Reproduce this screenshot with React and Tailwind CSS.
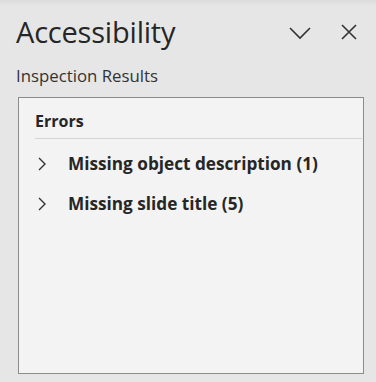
export default function App() {
  return (
    <div className="w-[376px] h-[382px] bg-[#e6e6e6] text-[#252525] relative overflow-hidden" style={{ fontFamily: '"Open Sans", "Noto Sans", sans-serif' }}>
      <div className="absolute top-0 left-0 right-0 h-[6px] bg-gradient-to-b from-[#dcdcdc] to-[#e6e6e6]" />
      <div className="flex items-center pl-[16px] pr-[18px] pt-[14px] h-[50px]">
        <div className="text-[29px] leading-[36px] text-[#262626] tracking-[-0.2px]">Accessibility</div>
        <div className="ml-auto flex items-center gap-[29px]">
          <svg width="22" height="14" viewBox="0 0 22 14" className="mt-[2px]">
            <path d="M1 2 L11 12 L21 2" fill="none" stroke="#333" strokeWidth="1.6" />
          </svg>
          <svg width="18" height="18" viewBox="0 0 18 18">
            <path d="M2 2 L16 16 M16 2 L2 16" fill="none" stroke="#333" strokeWidth="1.6" />
          </svg>
        </div>
      </div>
      <div className="pl-[16px] mt-[16px] text-[16.8px] leading-[20px] text-[#333]">Inspection Results</div>
      <div className="ml-[18px] mr-[12px] mt-[11px] h-[277px] border border-[#8c8c8c] bg-[#f3f3f3] pl-[16px] pr-[1px]">
        <div className="pt-[13px] pb-[7px] border-b border-[#d4d4d4] text-[16px] leading-[20px] font-bold text-[#262626]">Errors</div>
        <div className="flex items-center h-[40px] mt-[5px]">
          <svg width="10" height="14" viewBox="0 0 10 14" className="ml-[2px]">
            <path d="M2 1 L8 7 L2 13" fill="none" stroke="#333" strokeWidth="1.4" />
          </svg>
          <span className="ml-[21px] text-[17.2px] font-bold text-[#262626]">Missing object description (1)</span>
        </div>
        <div className="flex items-center h-[40px]">
          <svg width="10" height="14" viewBox="0 0 10 14" className="ml-[2px]">
            <path d="M2 1 L8 7 L2 13" fill="none" stroke="#333" strokeWidth="1.4" />
          </svg>
          <span className="ml-[21px] text-[17.2px] font-bold text-[#262626]">Missing slide title (5)</span>
        </div>
      </div>
    </div>
  );
}
